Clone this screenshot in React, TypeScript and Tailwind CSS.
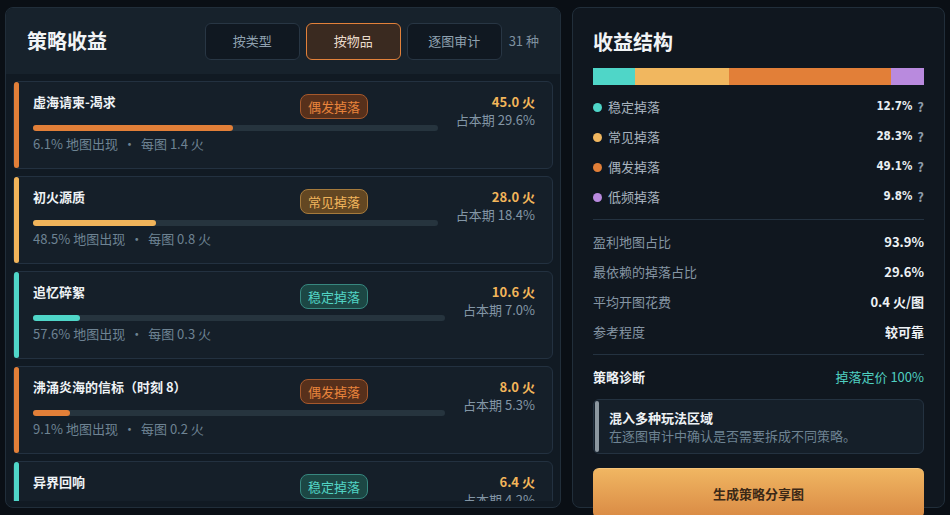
const font = "font-['Noto_Sans_CJK_SC','Noto_Sans',sans-serif]"

const tabs = [
  { label: '按类型', active: false },
  { label: '按物品', active: true },
  { label: '逐图审计', active: false },
]

const badgeStyles = {
  偶发掉落: 'bg-[#57301b] border-[#a5582c] text-[#e8843c]',
  常见掉落: 'bg-[#634722] border-[#a57a3c] text-[#f1b55c]',
  稳定掉落: 'bg-[#1c4744] border-[#37877f] text-[#52d4c4]',
} as const

const accents = {
  偶发掉落: 'bg-[#e27f38]',
  常见掉落: 'bg-[#f1b45a]',
  稳定掉落: 'bg-[#4fd6c8]',
} as const

type Kind = keyof typeof badgeStyles

const items: { name: string; kind: Kind; fill: number; rate: string; per: string; value: string; share: string }[] = [
  { name: '虚海请柬-渴求', kind: '偶发掉落', fill: 49.4, rate: '6.1%', per: '1.4', value: '45.0 火', share: '占本期 29.6%' },
  { name: '初火源质', kind: '常见掉落', fill: 30.5, rate: '48.5%', per: '0.8', value: '28.0 火', share: '占本期 18.4%' },
  { name: '追忆碎絮', kind: '稳定掉落', fill: 11.4, rate: '57.6%', per: '0.3', value: '10.6 火', share: '占本期 7.0%' },
  { name: '沸涌炎海的信标（时刻 8）', kind: '偶发掉落', fill: 9, rate: '9.1%', per: '0.2', value: '8.0 火', share: '占本期 5.3%' },
  { name: '异界回响', kind: '稳定掉落', fill: 7, rate: '42.4%', per: '0.2', value: '6.4 火', share: '占本期 4.2%' },
]

const structure = [
  { label: '稳定掉落', pct: 12.7, color: 'bg-[#4fd6c8]' },
  { label: '常见掉落', pct: 28.3, color: 'bg-[#f1b75f]' },
  { label: '偶发掉落', pct: 49.1, color: 'bg-[#e27f38]' },
  { label: '低频掉落', pct: 9.8, color: 'bg-[#b98ade]' },
]

const metrics = [
  { label: '盈利地图占比', value: '93.9%' },
  { label: '最依赖的掉落占比', value: '29.6%' },
  { label: '平均开图花费', value: '0.4 火/图' },
  { label: '参考程度', value: '较可靠' },
]

function ItemCard({ item }: { item: (typeof items)[number] }) {
  return (
    <div className="flex h-[88px] shrink-0 rounded-md border border-[#233140] bg-[#151f29]">
      <div className={`w-[5px] shrink-0 rounded-full ${accents[item.kind]}`} />
      <div className="ml-[14px] mr-[17px] flex min-w-0 flex-1">
        <div className="min-w-0 flex-1 pt-[10px]">
          <div className="flex items-start">
            <div className="w-[267px] truncate text-[13px] font-bold leading-[20px] text-[#eef2f5]">{item.name}</div>
            <span className={`mt-[2px] rounded-lg border px-[7px] text-[13px] leading-[23px] ${badgeStyles[item.kind]}`}>
              {item.kind}
            </span>
          </div>
          <div className="mt-[6px] h-[6px] rounded-full bg-[#26343e]">
            <div className={`h-full rounded-full ${accents[item.kind]}`} style={{ width: `${item.fill}%` }} />
          </div>
          <div className="mt-[3px] text-[13px] leading-[20px] text-[#6e8393]">
            {item.rate} 地图出现<span className="mx-[5px]">·</span>每图 {item.per} 火
          </div>
        </div>
        <div className="ml-[18px] pt-[11px] text-right">
          <div className="text-[13px] font-bold leading-[18px] text-[#f2b55a]">{item.value}</div>
          <div className="text-[13px] leading-[18px] text-[#8396a6]">{item.share}</div>
        </div>
      </div>
    </div>
  )
}

export default function App() {
  return (
    <div className={`flex h-[515px] w-[950px] gap-[11px] overflow-hidden bg-[#0a0f15] pl-[5px] pt-[7px] ${font}`}>
      {/* Left: strategy income */}
      <div className="flex h-[501px] w-[556px] flex-col overflow-hidden rounded-lg border border-[#212e3a] bg-[#111a23]">
        <div className="flex h-[66px] shrink-0 items-center justify-between bg-[#17222c] pl-[21px] pr-[21px]">
          <h1 className="text-[20px] font-bold text-[#f1f4f6]">策略收益</h1>
          <div className="flex items-center gap-[6px]">
            {tabs.map(t => (
              <div
                key={t.label}
                className={`flex h-[37px] w-[95px] items-center justify-center rounded-md border text-[13px] ${
                  t.active
                    ? 'border-[#e2813a] bg-[#3a2a20] text-[#eadccd]'
                    : 'border-[#283644] bg-[#101821] text-[#8fa1b0]'
                }`}
              >
                {t.label}
              </div>
            ))}
            <span className="ml-[1px] text-[13px] text-[#7f91a0]">31 种</span>
          </div>
        </div>
        <div className="min-h-0 flex-1 px-[7px] pb-[6px] pt-[7px]">
          <div className="flex h-full flex-col gap-[7px] overflow-hidden">
            {items.map(it => (
              <ItemCard key={it.name} item={it} />
            ))}
          </div>
        </div>
      </div>

      {/* Right: income structure */}
      <div className="h-[501px] w-[373px] rounded-lg border border-[#212e3a] bg-[#10171f] px-[20px] pt-[20px]">
        <h2 className="text-[20px] font-bold leading-[28px] text-[#f1f4f6]">收益结构</h2>
        <div className="mt-[12px] flex h-[17px]">
          {structure.map(s => (
            <div key={s.label} className={s.color} style={{ width: `${s.pct}%` }} />
          ))}
        </div>
        <div className="mt-[7px]">
          {structure.map(s => (
            <div key={s.label} className="flex h-[30px] items-center">
              <span className={`h-[9px] w-[9px] rounded-full ${s.color}`} />
              <span className="ml-[6px] flex-1 text-[13px] text-[#a7b3be]">{s.label}</span>
              <span className="font-['DejaVu_Sans_Condensed','Liberation_Sans_Narrow','Noto_Sans',sans-serif] text-[11.5px] font-bold text-[#e8eef2]">
                {s.pct}%
              </span>
              <span className="ml-[5px] text-[13px] font-bold text-[#8d9cab]">?</span>
            </div>
          ))}
        </div>
        <div className="mt-[7px] border-t border-[#243240]" />
        <div className="mt-[7px]">
          {metrics.map(m => (
            <div key={m.label} className="flex h-[30px] items-center justify-between">
              <span className="text-[13px] text-[#8595a3]">{m.label}</span>
              <span className="text-[13px] font-bold text-[#eef2f5]">{m.value}</span>
            </div>
          ))}
        </div>
        <div className="mt-[7px] border-t border-[#243240]" />
        <div className="mt-[7px] flex h-[30px] items-center justify-between">
          <span className="text-[13px] font-bold text-[#eef2f5]">策略诊断</span>
          <span className="text-[13px] text-[#4fcfc0]">掉落定价 100%</span>
        </div>
        <div className="mt-[7px] flex h-[55px] rounded-md border border-[#243240] bg-[#151f29]">
          <div className="my-[1px] ml-[1px] w-[4px] rounded-full bg-[#8c979f]" />
          <div className="ml-[10px] pt-[9px]">
            <div className="text-[13px] font-bold leading-[18px] text-[#eef2f5]">混入多种玩法区域</div>
            <div className="text-[13px] leading-[18px] text-[#6e8393]">在逐图审计中确认是否需要拆成不同策略。</div>
          </div>
        </div>
        <button className="mt-[14px] flex h-[50px] w-full items-center justify-center rounded-md border-t border-[#f6c47a] bg-gradient-to-b from-[#f0b662] to-[#d98a44] text-[13px] font-bold text-[#3b2816]">
          生成策略分享图
        </button>
      </div>
    </div>
  )
}
